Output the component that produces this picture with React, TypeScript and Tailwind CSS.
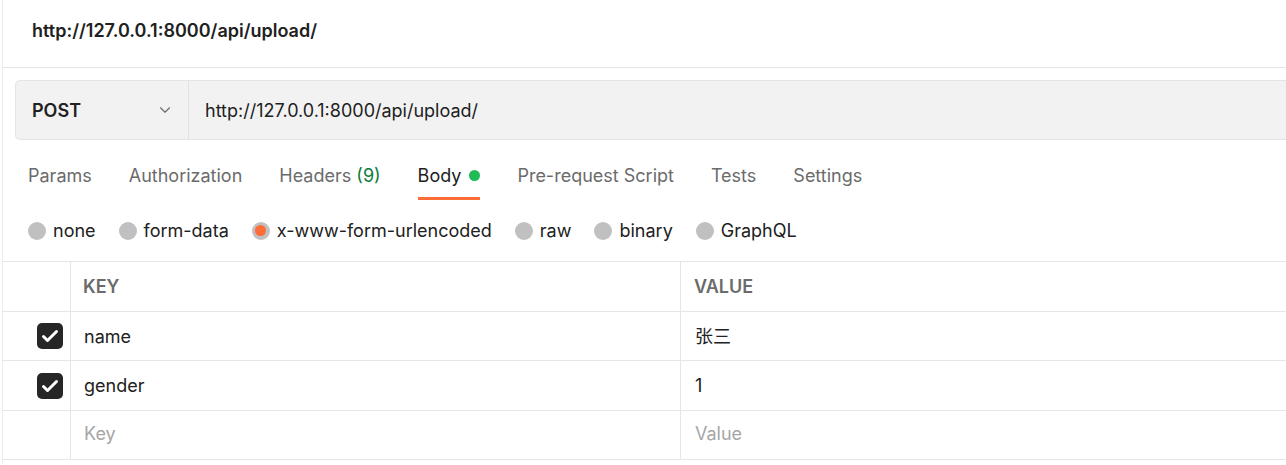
import { ChevronDown } from 'lucide-react';

const font = { fontFamily: 'Inter, "Noto Sans CJK SC", sans-serif' };

const tabs = [
  { label: 'Params' },
  { label: 'Authorization' },
  { label: 'Headers', count: '(9)' },
  { label: 'Body', active: true },
  { label: 'Pre-request Script' },
  { label: 'Tests' },
  { label: 'Settings' },
];

const bodyTypes = ['none', 'form-data', 'x-www-form-urlencoded', 'raw', 'binary', 'GraphQL'];

const rows = [
  { key: 'name', value: '张三', checked: true, h: 'h-[49px]' },
  { key: 'gender', value: '1', checked: true, h: 'h-[50px]' },
];

const Check = () => (
  <span className="block w-[26px] h-[26px] rounded-[5px] bg-[#262626]">
    <svg width="26" height="26" viewBox="0 0 26 26" fill="none">
      <path d="M6.5 13.5l4 4 9-9" stroke="white" strokeWidth="3" strokeLinecap="round" strokeLinejoin="round" />
    </svg>
  </span>
);

export default function App() {
  return (
    <div className="w-[1286px] h-[465px] bg-white overflow-hidden text-[#212121] text-[18px]" style={font}>
      <div className="ml-[2px] h-full border-l border-[#ececec]">
        <div className="h-[68px] flex items-center pl-[29px] pb-[6px] border-b border-[#e6e6e6]">
          <h1 className="font-semibold">http://127.0.0.1:8000/api/upload/</h1>
        </div>

        <div className="pl-[12px] pt-[12px]">
          <div className="flex h-[60px] bg-[#f2f2f2] border border-r-0 border-[#e4e4e4] rounded-l-[5px]">
            <div className="w-[173px] flex items-center justify-between pl-[16px] pr-[14px] border-r border-[#e2e2e2]">
              <span className="font-semibold">POST</span>
              <ChevronDown size={18} strokeWidth={1.5} color="#6b6b6b" />
            </div>
            <div className="flex items-center pl-[16px]">http://127.0.0.1:8000/api/upload/</div>
          </div>
        </div>

        <div className="flex gap-[37px] pl-[25px] h-[60px] items-stretch">
          {tabs.map((t) => (
            <div
              key={t.label}
              className={`flex items-center gap-[8px] pt-[13px] border-b-[3px] ${t.active ? 'border-[#ff6c37] text-[#212121]' : 'border-transparent text-[#6b6b6b]'}`}
            >
              <span>
                {t.label}
                {t.count && <span className="text-[#0c7b3c]"> {t.count}</span>}
              </span>
              {t.active && <span className="w-[11px] h-[11px] rounded-full bg-[#1fbb55]" />}
            </div>
          ))}
        </div>

        <div className="flex gap-[23px] pl-[25px] h-[61px] items-center">
          {bodyTypes.map((b) => (
            <div key={b} className="flex items-center gap-[7px]">
              {b === 'x-www-form-urlencoded' ? (
                <span className="flex items-center justify-center w-[18px] h-[18px] rounded-full bg-[#c0c0c0]">
                  <span className="w-[11px] h-[11px] rounded-full bg-[#ff6c37]" />
                </span>
              ) : (
                <span className="w-[18px] h-[18px] rounded-full bg-[#c0c0c0]" />
              )}
              <span>{b}</span>
            </div>
          ))}
        </div>

        <div className="border-t border-[#e6e6e6]">
          <div className="grid grid-cols-[68px_610px_1fr] h-[50px] border-b border-[#e6e6e6]">
            <div className="border-r border-[#e6e6e6]" />
            <div className="flex items-center pl-[12px] border-r border-[#e6e6e6] font-semibold text-[#6b6b6b]">KEY</div>
            <div className="flex items-center pl-[13px] font-semibold text-[#6b6b6b]">VALUE</div>
          </div>
          {rows.map((r) => (
            <div key={r.key} className={`grid grid-cols-[68px_610px_1fr] ${r.h} border-b border-[#e6e6e6]`}>
              <div className="flex items-center justify-end pr-[7px] border-r border-[#e6e6e6]">
                {r.checked && <Check />}
              </div>
              <div className="flex items-center pl-[13px] border-r border-[#e6e6e6]">{r.key}</div>
              <div className="flex items-center pl-[14px]">{r.value}</div>
            </div>
          ))}
          <div className="grid grid-cols-[68px_610px_1fr] h-[49px] border-b border-[#e6e6e6] text-[#a6a6a6]">
            <div className="border-r border-[#e6e6e6]" />
            <div className="flex items-center pl-[13px] pb-[3px] border-r border-[#e6e6e6]">Key</div>
            <div className="flex items-center pl-[14px] pb-[3px]">Value</div>
          </div>
        </div>
      </div>
    </div>
  );
}
